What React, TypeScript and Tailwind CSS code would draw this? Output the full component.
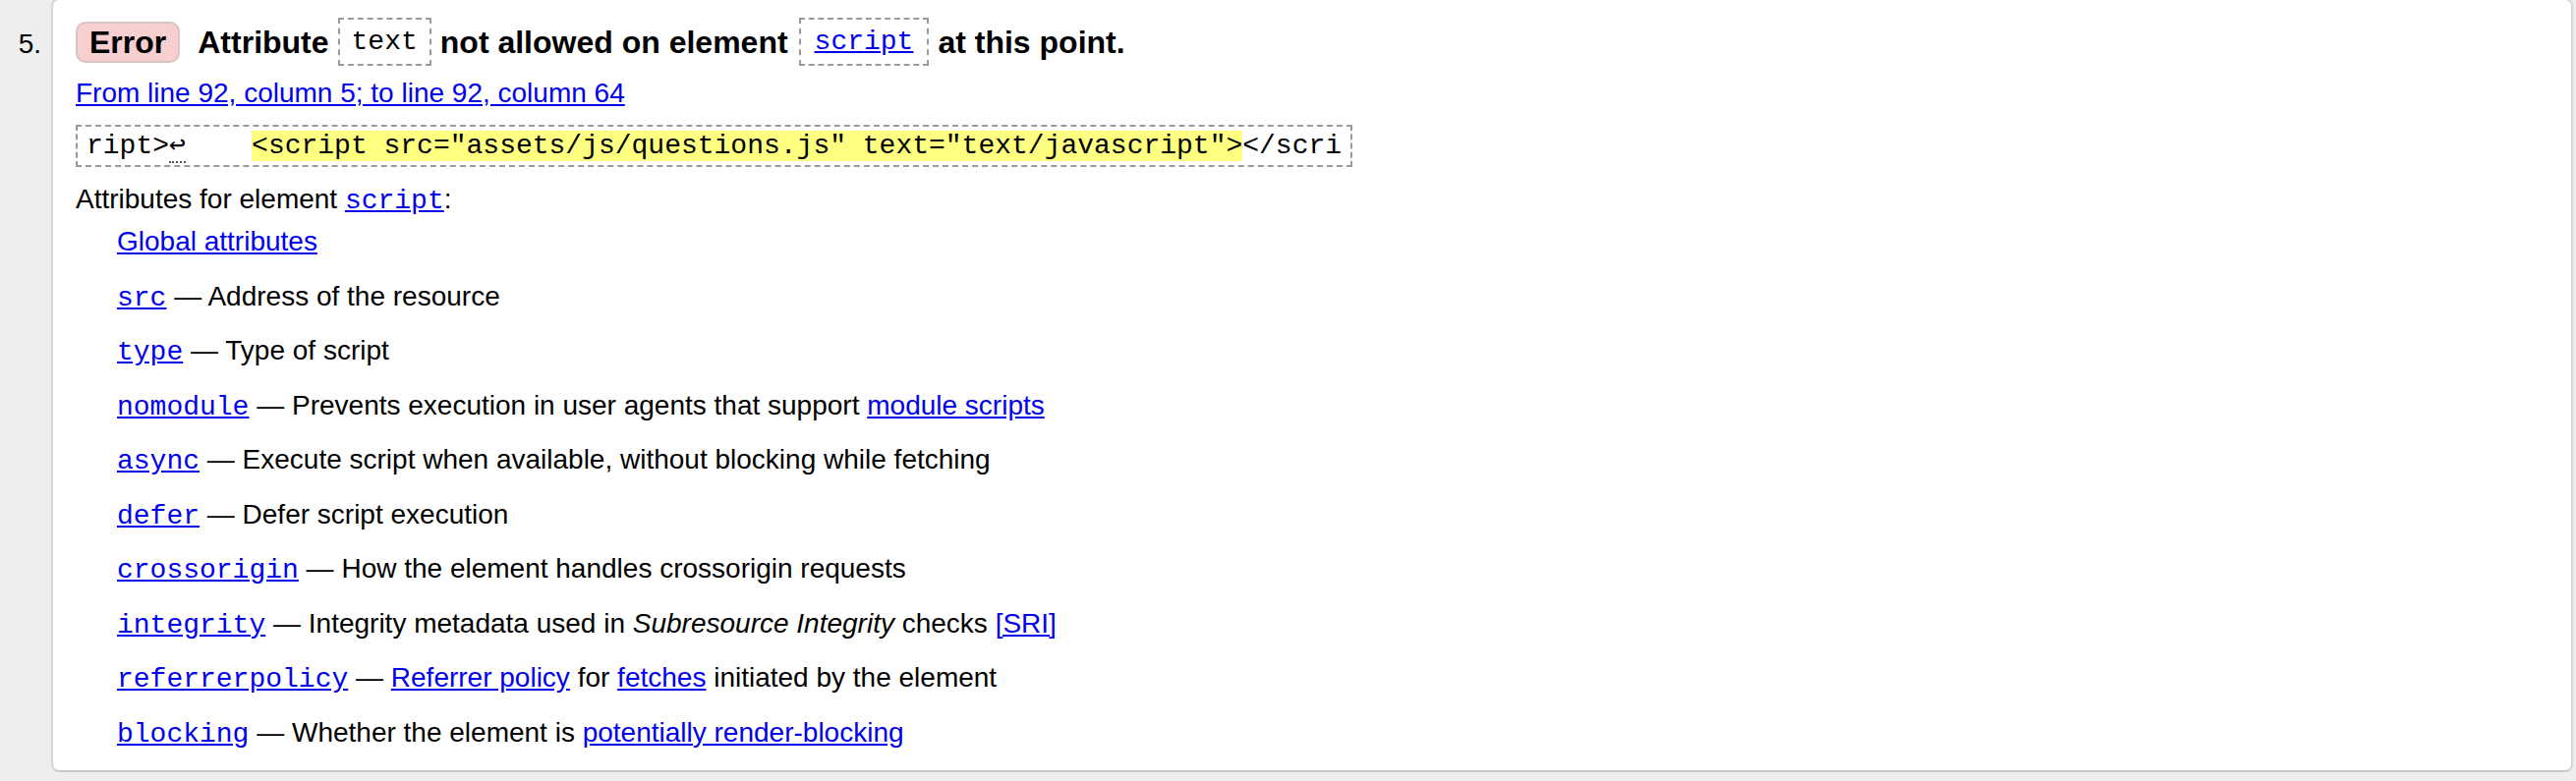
import React from "react";

const mono = "font-['Liberation_Mono','DejaVu_Sans_Mono',monospace]";

function Link({ children, code }: { children: React.ReactNode; code?: boolean }) {
  return (
    <a href="#" className={code ? `${mono} text-[#0000ee] underline` : "text-[#0000ee] underline"}>
      {children}
    </a>
  );
}

const attributes: { name: string; desc: React.ReactNode }[] = [
  { name: "src", desc: <>Address of the resource</> },
  { name: "type", desc: <>Type of script</> },
  {
    name: "nomodule",
    desc: (
      <>
        Prevents execution in user agents that support <Link>module scripts</Link>
      </>
    ),
  },
  { name: "async", desc: <>Execute script when available, without blocking while fetching</> },
  { name: "defer", desc: <>Defer script execution</> },
  { name: "crossorigin", desc: <>How the element handles crossorigin requests</> },
  {
    name: "integrity",
    desc: (
      <>
        Integrity metadata used in <em>Subresource Integrity</em> checks <Link>[SRI]</Link>
      </>
    ),
  },
  {
    name: "referrerpolicy",
    desc: (
      <>
        <Link>Referrer policy</Link> for <Link>fetches</Link> initiated by the element
      </>
    ),
  },
  {
    name: "blocking",
    desc: (
      <>
        Whether the element is <Link>potentially render-blocking</Link>
      </>
    ),
  },
];

export default function App() {
  return (
    <div className="h-screen overflow-hidden bg-[#eeeeee] pr-[3px] font-['Liberation_Sans',Arial,sans-serif] text-[28px] text-black">
      <div className="-mt-[2px] flex items-baseline">
        {/* list number */}
        <div className="w-[52px] shrink-0 pr-[10px] text-right">5.</div>

        {/* message card */}
        <div className="flex-1 rounded-[8px] border-2 border-[#d6d6d6] border-b-[#c8c8c8] bg-white pb-[20px] pl-[23px] pt-[18px]">
          <div className="flex h-[49px] items-center gap-[9px] text-[32px] font-bold">
            <span className="mr-[9px] inline-flex h-[42px] items-center rounded-[10px] border-2 border-[#d9c4c4] bg-[#f7cfcf] px-[12px]">
              Error
            </span>
            <span>Attribute</span>
            <code className={`${mono} inline-block border-2 border-dashed border-[#9a9a9a] px-[12px] py-[4px] text-[28px] font-normal leading-[37px]`}>
              text
            </code>
            <span className="mr-[2px]">not allowed on element</span>
            <code className={`${mono} inline-block border-2 border-dashed border-[#9a9a9a] px-[14px] py-[4px] text-[28px] font-normal leading-[37px]`}>
              <a href="#" className="text-[#0000ee] underline">script</a>
            </code>
            <span>at this point.</span>
          </div>

          <p className="mt-[10px] h-[36px] leading-[36px]">
            <Link>From line 92, column 5; to line 92, column 64</Link>
          </p>

          <div className={`${mono} mt-[14px] w-fit whitespace-pre border-2 border-dashed border-[#9a9a9a] px-[9px] py-[4px] leading-[31px]`}>
            ript&gt;<span className="border-b-2 border-dotted border-[#555]">↩</span>
            {"    "}
            <span className="bg-[#ffff80]">&lt;script src="assets/js/questions.js" text="text/javascript"&gt;</span>
            &lt;/scri
          </div>

          <p className="mt-[15px] h-[36px] leading-[36px]">
            Attributes for element <Link code>script</Link>:
          </p>

          <div className="mt-[7px] flex flex-col gap-[19.5px] pl-[42px] leading-[36px]">
            <div className="h-[36px]">
              <Link>Global attributes</Link>
            </div>
            {attributes.map((a) => (
              <div key={a.name} className="h-[36px]">
                <Link code>{a.name}</Link> — {a.desc}
              </div>
            ))}
          </div>
        </div>
      </div>
    </div>
  );
}
